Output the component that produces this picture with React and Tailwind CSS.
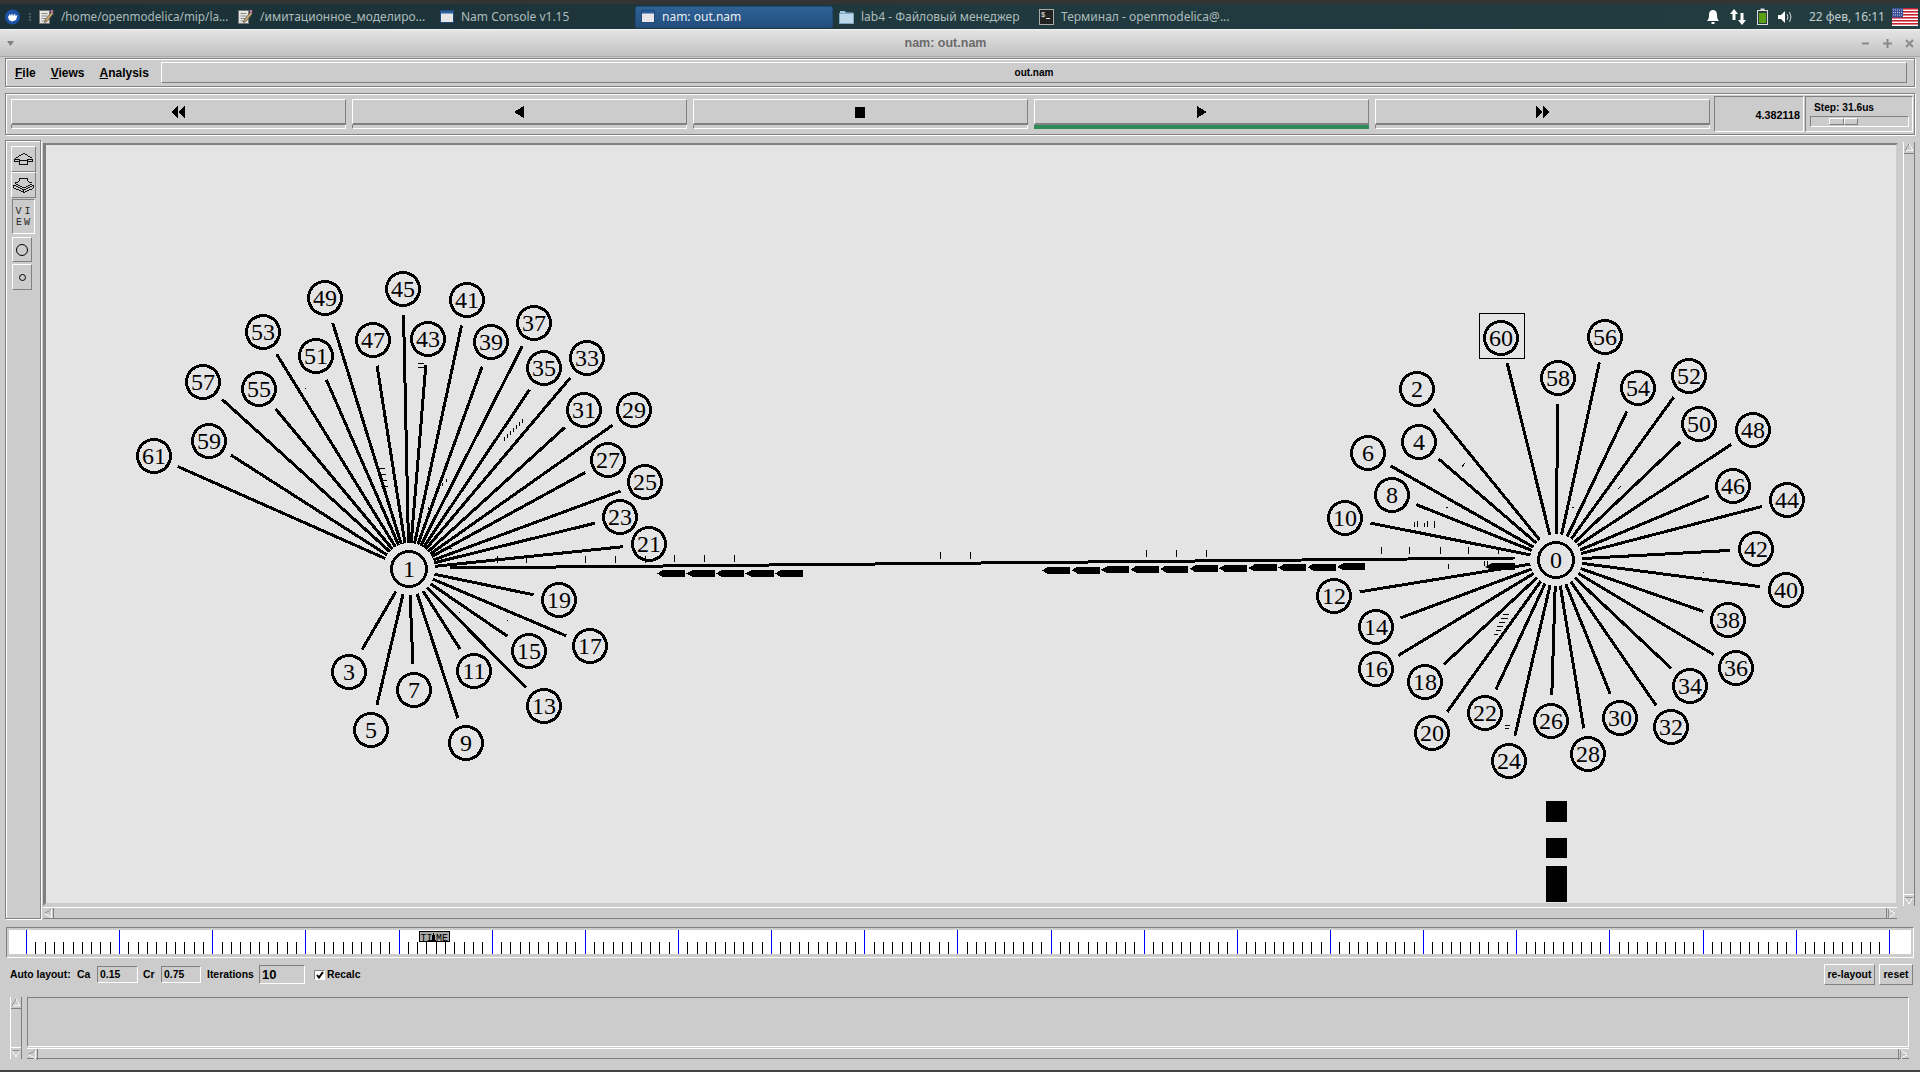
const raised = "border border-t-white border-l-white border-r-[#808080] border-b-[#808080]";
const sunken = "border border-t-[#808080] border-l-[#808080] border-r-white border-b-white";
const groove = "border border-[#808080] shadow-[inset_1px_1px_0_#fff,1px_1px_0_#fff]";

// node positions are page pixels, the svg viewBox below keeps them close to that
const leftNodes = [
  [3, 349, 671], [5, 371, 729], [7, 414, 689], [9, 466, 742], [11, 474, 670], [13, 544, 705],
  [15, 529, 650], [17, 590, 645], [19, 559, 599], [21, 649, 543], [23, 620, 516], [25, 645, 481],
  [27, 608, 459], [29, 634, 409], [31, 584, 409], [33, 587, 357], [35, 544, 367], [37, 534, 322],
  [39, 491, 341], [41, 467, 299], [43, 428, 338], [45, 403, 288], [47, 373, 339], [49, 325, 297],
  [51, 316, 355], [53, 263, 331], [55, 259, 388], [57, 203, 381], [59, 209, 440], [61, 154, 455],
];
const rightNodes = [
  [2, 1417, 388], [4, 1419, 441], [6, 1368, 452], [8, 1392, 494], [10, 1345, 517], [12, 1334, 595],
  [14, 1376, 626], [16, 1376, 668], [18, 1425, 681], [20, 1432, 732], [22, 1485, 712], [24, 1509, 760],
  [26, 1551, 720], [28, 1588, 753], [30, 1620, 717], [32, 1671, 726], [34, 1690, 685], [36, 1736, 667],
  [38, 1728, 619], [40, 1786, 589], [42, 1756, 548], [44, 1787, 499], [46, 1733, 485], [48, 1753, 429],
  [50, 1699, 423], [52, 1689, 375], [54, 1638, 387], [56, 1605, 336], [58, 1558, 377], [60, 1501, 337],
];
const hub1 = [409, 568];
const hub0 = [1556, 559];

const linkTicks = [
  [497, 555], [526, 555], [585, 555], [615, 555], [645, 555], [674, 554], [704, 554], [734, 554],
  [940, 551], [970, 551], [1146, 549], [1176, 549], [1206, 549], [1381, 546], [1409, 546], [1440, 546],
  [1468, 546], [1498, 546],
];

// tiny marks of packets that are dropped or on their way along the links
const marks = [
  "M418 362h6M418 366h6", "M378 467h7M379 473h7M380 479h7M381 485h7",
  "M504 436v4M507 433v4M510 430v4M513 427v4M516 424v4M519 421v4M522 418v4",
  "M428 506v3M434 496v3M438 488v3M442 482v3M446 478v3",
  "M305 387h1M459 611h1M507 619h1M450 547h2", "M1462 466l3-4M1446 506h2M1618 488l3-3M1572 506h2M1592 542h3M1703 571h1M1523 579h2",
  "M1414 521v5M1417 520v6M1424 522v4M1427 520v6M1434 520v7",
  "M1494 633h4M1496 629h5M1497 625h6M1499 621h6M1501 617h7M1503 613h6",
  "M1505 724h5M1505 727h4", "M1448 563v5M1484 560v5M1487 560v5",
];

// line between two centres, cut back so it stops short of both circles
const trimmed = (from, to, gap) => {
  const dx = to[0] - from[0];
  const dy = to[1] - from[1];
  const len = Math.hypot(dx, dy);
  return {
    x1: from[0] + (dx / len) * gap,
    y1: from[1] + (dy / len) * gap,
    x2: to[0] - (dx / len) * gap,
    y2: to[1] - (dy / len) * gap,
  };
};

const Packets = ({ x, y, count, rise }) => (
  <>
    {Array.from({ length: count }).map((_, i) => {
      const px = x + i * 29.5;
      const py = y - (rise * i) / count;
      return (
        <polygon
          key={i}
          points={`${px},${py + 3.5} ${px + 6},${py} ${px + 28},${py} ${px + 28},${py + 7} ${px + 6},${py + 7}`}
          fill="#000"
          shapeRendering="crispEdges"
        />
      );
    })}
  </>
);

const Node = ({ id, x, y, r = 16.5 }) => (
  <g>
    <circle cx={x} cy={y} r={r} fill="none" stroke="#000" strokeWidth="3" shapeRendering="crispEdges" />
    <text
      x={x}
      y={y + 8}
      textAnchor="middle"
      fontSize="24"
      fill="#000"
      style={{ fontFamily: '"Liberation Serif", serif' }}
    >
      {id}
    </text>
  </g>
);

const Diagram = () => (
  <svg width="1850" height="757" viewBox="46 144 1850 757" className="block">
    <g stroke="#000" strokeWidth="3" shapeRendering="crispEdges">
      {leftNodes.map(([id, x, y]) => (
        <line key={id} {...trimmed(hub1, [x, y], 26)} />
      ))}
      {rightNodes.map(([id, x, y]) => (
        <line key={id} {...trimmed(hub0, [x, y], 26)} />
      ))}
      <line x1="450" y1="567" x2="1515" y2="557" />
    </g>
    <g stroke="#000" strokeWidth="1" fill="none" shapeRendering="crispEdges">
      {linkTicks.map(([x, y]) => (
        <line key={x} x1={x} y1={y} x2={x} y2={y + 7} />
      ))}
      {marks.map((d) => (
        <path key={d} d={d} />
      ))}
      <rect x="1479.5" y="312.5" width="45" height="45" />
    </g>
    <Packets x={657} y={569} count={5} rise={0} />
    <Packets x={1042} y={566} count={11} rise={4} />
    <polygon points="1485,566 1492,562 1515,562 1515,569 1492,569" fill="#000" />
    {leftNodes.map(([id, x, y]) => (
      <Node key={id} id={id} x={x} y={y} />
    ))}
    {rightNodes.map(([id, x, y]) => (
      <Node key={id} id={id} x={x} y={y} />
    ))}
    <Node id={1} x={hub1[0]} y={hub1[1]} r={17.5} />
    <Node id={0} x={hub0[0]} y={hub0[1]} r={17.5} />
    <g fill="#000" shapeRendering="crispEdges">
      <rect x="1546" y="800" width="21" height="21" />
      <rect x="1546" y="837" width="21" height="20" />
      <rect x="1546" y="865" width="21" height="36" />
    </g>
  </svg>
);

const Timeline = () => {
  const blue = Array.from({ length: 21 }).map((_, i) => 26.5 + i * 93.14);
  return (
    <svg width="1902" height="24" viewBox="9 930 1902 24" className="block">
      <g shapeRendering="crispEdges" strokeWidth="1">
        {blue.map((x) => (
          <line key={x} x1={x} y1="930" x2={x} y2="954" stroke="#0000ff" />
        ))}
        {blue.slice(0, 20).map((x) =>
          [1, 2, 3, 4, 5, 6, 7, 8, 9].map((i) => (
            <line key={i} x1={x + i * 9.31} y1="942" x2={x + i * 9.31} y2="954" stroke="#000" />
          ))
        )}
        <rect x="419.5" y="931.5" width="30" height="10" fill="#a8a8a8" stroke="#000" />
      </g>
      <text x="420.5" y="940.5" fontSize="10" fill="#000" style={{ fontFamily: '"Liberation Mono", monospace' }}>TI</text>
      <text x="436" y="940.5" fontSize="10" fill="#000" style={{ fontFamily: '"Liberation Mono", monospace' }}>ME</text>
      <polygon points="433,933 434,933 436,942 431,942" fill="#000" shapeRendering="crispEdges" />
    </svg>
  );
};

const ScrollArrow = ({ dir, className }) => {
  const points = {
    up: "6,2 1,10 11,10",
    down: "1,2 11,2 6,10",
    left: "2,6 10,1 10,11",
    right: "2,1 2,11 10,6",
  };
  return (
    <svg viewBox="0 0 12 12" className={className}>
      <polygon points={points[dir]} fill="#cccccc" stroke="#fff" strokeWidth="1" shapeRendering="crispEdges" />
      <polyline
        points={points[dir].split(" ").slice(0, 2).join(" ")}
        fill="none"
        stroke="#808080"
        strokeWidth="1"
        shapeRendering="crispEdges"
      />
    </svg>
  );
};

const HScroll = ({ className }) => (
  <div className={`flex items-stretch border-t border-t-white border-b border-b-[#808080] ${className}`}>
    <ScrollArrow dir="left" className="w-[11px] h-[11px] shrink-0 border-r border-[#808080]" />
    <div className="flex-1" />
    <ScrollArrow dir="right" className="w-[11px] h-[11px] shrink-0 border-l border-[#808080]" />
  </div>
);

const VScroll = ({ className }) => (
  <div className={`flex flex-col items-stretch border-l border-l-white border-r border-r-[#808080] ${className}`}>
    <ScrollArrow dir="up" className="w-full h-[12px] shrink-0 border-b border-[#808080]" />
    <div className="flex-1" />
    <ScrollArrow dir="down" className="w-full h-[12px] shrink-0 border-t border-white" />
  </div>
);

const NoteIcon = () => (
  <svg width="15" height="15" viewBox="0 0 15 15" className="shrink-0">
    <rect x="0.5" y="1.5" width="10" height="13" fill="#e8e8e4" stroke="#777" />
    <path d="M2.5 4.5h6M2.5 7h6M2.5 9.5h5M2.5 12h4" stroke="#888" strokeWidth="1" />
    <path d="M6 11 L12.5 3 L14.5 4.5 L8 12.5 L5.5 13.5 Z" fill="#c9a86a" stroke="#4a4a4a" strokeWidth="0.7" />
    <rect x="11.8" y="1" width="2.5" height="2.4" fill="#c77fa8" transform="rotate(35 13 2)" />
  </svg>
);

const WindowIcon = () => (
  <svg width="14" height="13" viewBox="0 0 14 13" className="shrink-0">
    <rect x="0.5" y="0.5" width="13" height="12" fill="#e6e6e6" stroke="#1f4a7a" />
    <rect x="1" y="1" width="12" height="2.5" fill="#2a5f9e" />
  </svg>
);

const FolderIcon = () => (
  <svg width="15" height="14" viewBox="0 0 15 14" className="shrink-0">
    <path d="M1 3 V1 H6 L7 2.5 H14 V4 Z" fill="#9fc4dd" />
    <rect x="0.5" y="3.5" width="14" height="10" fill="#bcd8ea" stroke="#7fa6c2" />
  </svg>
);

const TerminalIcon = () => (
  <svg width="15" height="16" viewBox="0 0 15 16" className="shrink-0">
    <rect x="0.5" y="0.5" width="14" height="15" fill="#222" stroke="#aaa" />
    <text x="2" y="7.5" fontSize="7" fill="#eee" style={{ fontFamily: '"Liberation Mono", monospace' }}>$</text>
    <path d="M7 9.5h4" stroke="#eee" strokeWidth="1" />
  </svg>
);

const TaskItem = ({ icon, label, className = "", textClass = "text-[12px] text-[#aebcbc]" }) => (
  <div className={`flex items-center shrink-0 gap-[7px] ${className}`}>
    {icon}
    <span className={`whitespace-nowrap ${textClass}`}>{label}</span>
  </div>
);

const TaskBar = () => (
  <div
    className="h-[29px] flex items-center shrink-0 border-t-4 border-t-[#343434] bg-gradient-to-r from-[#1a3036] via-[#1f393e] to-[#223c40] pl-[5px] overflow-hidden"
    style={{ fontFamily: '"Noto Sans", sans-serif' }}
  >
    <svg width="15" height="16" viewBox="0 0 15 16" className="shrink-0">
      <circle cx="7.5" cy="8" r="7.5" fill="#1d52a8" />
      <path d="M3 8 L5 5 L6 7 L7 4 L8 7 L10 4.5 L10.5 7 L12.5 6 L11 11 L7 12.5 L4 11 Z" fill="#fff" />
    </svg>
    <div className="w-[2px] h-[8px] ml-[9px] mr-[8px] border-l-2 border-dotted border-[#4b5b5e]" />
    <TaskItem icon={<NoteIcon />} label="/home/openmodelica/mip/la..." className="w-[199px]" textClass="text-[11.7px] text-[#aebcbc]" />
    <TaskItem icon={<NoteIcon />} label="/имитационное_моделиро..." className="w-[202px]" />
    <TaskItem icon={<WindowIcon />} label="Nam Console v1.15" className="w-[195px]" />
    <TaskItem
      icon={<WindowIcon />}
      label="nam: out.nam"
      textClass="text-[12px] text-[#e8eef2]"
      className="w-[198px] h-[22px] pl-[5px] rounded-[2px] border border-[#1f4a75] bg-gradient-to-b from-[#2f6296] to-[#224e7e]"
    />
    <TaskItem icon={<FolderIcon />} label="lab4 - Файловый менеджер" className="w-[200px] ml-[6px]" />
    <TaskItem icon={<TerminalIcon />} label="Терминал - openmodelica@..." />
    <div className="ml-auto flex items-center">
      <svg width="14" height="16" viewBox="0 0 14 16">
        <path d="M7 1 C4 1 3 3.5 3 6 C3 9 2.5 10.5 1 12 H13 C11.5 10.5 11 9 11 6 C11 3.5 10 1 7 1 Z" fill="#fff" />
        <rect x="5.5" y="13" width="3" height="2" fill="#fff" />
      </svg>
      <svg width="18" height="18" viewBox="0 0 18 18" className="ml-[9px]">
        <path d="M5 1 L9 6 H6.5 V12 H3.5 V6 H1 Z" fill="#fff" />
        <path d="M13 17 L17 12 H14.5 V5 H11.5 V12 H9 Z" fill="#fff" />
      </svg>
      <svg width="11" height="17" viewBox="0 0 11 17" className="ml-[10px]">
        <rect x="3.5" y="0.5" width="4" height="2" fill="#ddd" />
        <rect x="0.5" y="2.5" width="10" height="14" fill="#2c3f3f" stroke="#ddd" />
        <rect x="2" y="5" width="7" height="10" fill="#5aa012" />
      </svg>
      <svg width="15" height="14" viewBox="0 0 15 14" className="ml-[10px]">
        <path d="M0 5 H3 L7 1 V13 L3 9 H0 Z" fill="#fff" />
        <path d="M9 4 Q11 7 9 10 M11.5 2 Q14.5 7 11.5 12" fill="none" stroke="#cfd6d6" strokeWidth="1" />
      </svg>
      <span className="ml-[16px] text-[12px] text-[#c4cfd0] whitespace-nowrap">22 фев, 16:11</span>
      <svg width="26" height="18" viewBox="0 0 26 18" className="ml-[7px] mr-[2px]">
        <rect width="26" height="18" fill="#fff" />
        {[0, 3, 6, 9, 12, 15].map((y) => (
          <rect key={y} y={y} width="26" height="1.6" fill="#c8202f" />
        ))}
        <rect width="11" height="9.5" fill="#3a4f94" />
        <path d="M1 2h9M1 4.5h9M1 7h9" stroke="#c9d0e6" strokeWidth="1" strokeDasharray="1 1" />
      </svg>
    </div>
  </div>
);

const TitleBar = () => (
  <div className="h-[28px] shrink-0 flex items-center pl-[7px] pr-[6px] bg-gradient-to-b from-[#e4e4e4] to-[#c2c2c2] border-t border-t-[#f2f2f2] border-b border-b-[#a8a8a8]">
    <svg width="7" height="5" viewBox="0 0 7 5">
      <polygon points="0,0 7,0 3.5,5" fill="#808080" />
    </svg>
    <span className="flex-1 text-center text-[12.5px] font-bold text-[#6b6b6b] pl-[16px]">nam: out.nam</span>
    <div className="flex items-center gap-[13px] text-[#8a8a8a]">
      <svg width="9" height="9" viewBox="0 0 9 9">
        <path d="M1 4.5h7" stroke="#8a8a8a" strokeWidth="2" />
      </svg>
      <svg width="9" height="9" viewBox="0 0 9 9">
        <path d="M0 4.5h9M4.5 0v9" stroke="#8a8a8a" strokeWidth="2" />
      </svg>
      <svg width="9" height="9" viewBox="0 0 9 9">
        <path d="M1 1l7 7M8 1l-7 7" stroke="#8a8a8a" strokeWidth="2" />
      </svg>
    </div>
  </div>
);

const MenuItem = ({ first, rest }) => (
  <span className="text-[12px] font-bold text-black">
    <span className="underline">{first}</span>
    {rest}
  </span>
);

const MenuBar = () => (
  <div className={`h-[29px] mt-px mx-[5px] shrink-0 flex items-center pl-[9px] pr-[7px] ${groove}`}>
    <div className="w-[146px] flex gap-[15px] shrink-0">
      <MenuItem first="F" rest="ile" />
      <MenuItem first="V" rest="iews" />
      <MenuItem first="A" rest="nalysis" />
    </div>
    <div className={`flex-1 h-[21px] flex items-center justify-center text-[10px] font-bold text-black ${raised}`}>
      out.nam
    </div>
  </div>
);

const Glyph = ({ children }) => (
  <svg width="16" height="12" viewBox="0 0 16 12">
    <g fill="#000" shapeRendering="crispEdges">{children}</g>
  </svg>
);

const PlayButton = ({ children, active }) => (
  <div className="w-[335px] flex flex-col shrink-0">
    <div className={`h-[26px] flex items-center justify-center border-t border-l border-t-white border-l-white border-r border-r-[#808080] border-b-2 border-b-[#808080]`}>
      {children}
    </div>
    <div className={`h-[4px] border-l border-r border-b ${active ? "bg-[#2e8b57] border-[#2e8b57]" : "border-l-[#808080] border-r-white border-b-white"}`} />
  </div>
);

const ToolBar = () => (
  <div className={`h-[42px] mt-[6px] mx-[5px] shrink-0 flex pl-[5px] pr-[2px] ${groove}`}>
    <div className="flex gap-[6px] pt-[5px]">
      <PlayButton>
        <Glyph>
          <polygon points="7,0 7,12 0,6" />
          <polygon points="14,0 14,12 7,6" />
        </Glyph>
      </PlayButton>
      <PlayButton>
        <Glyph>
          <polygon points="12,0 12,12 2,6" />
        </Glyph>
      </PlayButton>
      <PlayButton>
        <Glyph>
          <rect x="2" y="1" width="10" height="11" />
        </Glyph>
      </PlayButton>
      <PlayButton active>
        <Glyph>
          <polygon points="3,0 3,12 13,6" />
        </Glyph>
      </PlayButton>
      <PlayButton>
        <Glyph>
          <polygon points="1,0 1,12 8,6" />
          <polygon points="8,0 8,12 15,6" />
        </Glyph>
      </PlayButton>
    </div>
    <div className="flex ml-[4px] pt-[2px] h-[38px]">
      <div className={`w-[90px] h-[36px] flex items-center justify-end pr-[3px] pt-[2px] text-[10.8px] font-bold text-black ${sunken}`}>
        4.382118
      </div>
      <div className={`w-[108px] h-[36px] ml-px flex flex-col pl-[4px] pr-[3px] ${sunken}`}>
        <span className="text-[10.2px] font-bold text-black pl-[4px] mt-[4px] leading-[13px]">Step: 31.6us</span>
        <div className={`h-[11px] mt-[2px] pl-[18px] py-px ${sunken}`}>
          <div className="w-[29px] h-full flex">
            <div className={`flex-1 ${raised}`} />
            <div className={`flex-1 ${raised}`} />
          </div>
        </div>
      </div>
    </div>
  </div>
);

const SideButton = ({ children, className }) => (
  <div className={`flex items-center justify-center shrink-0 ${raised} ${className}`}>{children}</div>
);

const SideBar = () => (
  <div className={`w-[36px] h-[779px] ml-[5px] shrink-0 flex flex-col items-center pt-[5px] ${groove}`}>
    <SideButton className="w-[25px] h-[26px]">
      <svg width="25" height="26" viewBox="0 0 25 26">
        <g fill="none" stroke="#000" strokeWidth="1" shapeRendering="crispEdges">
          <path d="M12.5 7 L3 13 H8 V19 H17 V13 H22 Z" />
          <path d="M3 13 V16 H8 M22 13 V16 H17 M8 15 H17" />
        </g>
      </svg>
    </SideButton>
    <SideButton className="w-[25px] h-[26px]">
      <svg width="25" height="26" viewBox="0 0 25 26">
        <g fill="none" stroke="#000" strokeWidth="1" shapeRendering="crispEdges">
          <path d="M8 6 H17 V9 L22 11 L12.5 16 L3 11 L8 9 Z" />
          <path d="M2 13 V16 L12.5 21 L23 16 V13 M2 13 L12.5 18 L23 13 M12.5 18 V21" />
        </g>
      </svg>
    </SideButton>
    <div
      className={`w-[23px] h-[35px] mt-px shrink-0 flex flex-col items-center justify-center text-[10px] leading-[11px] text-[#222] ${sunken}`}
      style={{ fontFamily: '"Liberation Mono", monospace' }}
    >
      <span className="tracking-[3px] pl-[3px]">VI</span>
      <span className="tracking-[2px] pl-[2px]">EW</span>
    </div>
    <SideButton className="w-[20px] h-[25px] mt-[3px] mr-[2px]">
      <div className="w-[12px] h-[12px] rounded-full border border-black" />
    </SideButton>
    <SideButton className="w-[20px] h-[26px] mt-[2px] mr-[2px]">
      <div className="w-[7px] h-[7px] rounded-full border border-black" />
    </SideButton>
  </div>
);

const CanvasArea = () => (
  <div className="flex-1 flex ml-[2px] min-w-0">
    <div className="flex-1 flex flex-col pt-[3px] min-w-0">
      <div className="h-[763px] shrink-0 border-t-[2px] border-l-[3px] border-t-[#808080] border-l-[#808080] border-r-[2px] border-b-[3px] border-r-[#cccccc] border-b-[#cccccc] bg-[#e4e4e4] overflow-hidden">
        <Diagram />
      </div>
      <HScroll className="h-[12px] w-[1854px] mt-px" />
    </div>
    <VScroll className="w-[12px] h-[764px] mt-[2px] ml-[5px] mr-[5px] shrink-0" />
  </div>
);

const BottomRow = () => (
  <div className="h-[21px] mt-[6px] shrink-0 flex items-center pl-[10px] pr-[7px] text-[10.4px] font-bold text-black">
    <span className="w-[67px] shrink-0">Auto layout:</span>
    <span className="w-[20px] shrink-0">Ca</span>
    <div className={`w-[41px] h-[17px] flex items-center pl-[2px] shrink-0 ${sunken}`}>0.15</div>
    <span className="w-[18px] pl-[5px] box-content shrink-0">Cr</span>
    <div className={`w-[40px] h-[17px] flex items-center pl-[2px] shrink-0 ${sunken}`}>0.75</div>
    <span className="w-[52px] ml-[6px] shrink-0">Iterations</span>
    <div className={`w-[46px] h-[19px] flex items-center pl-[2px] text-[13px] shrink-0 ${sunken}`}>10</div>
    <div className={`w-[11px] h-[10px] ml-[9px] bg-white flex items-center justify-center shrink-0 ${sunken}`}>
      <svg width="8" height="8" viewBox="0 0 8 8">
        <path d="M1 4 L3 6.5 L7 1" fill="none" stroke="#000" strokeWidth="2" />
      </svg>
    </div>
    <span className="ml-[2px]">Recalc</span>
    <div className={`ml-auto w-[51px] h-[21px] flex items-center justify-center ${raised}`}>re-layout</div>
    <div className={`ml-[4px] w-[34px] h-[21px] flex items-center justify-center ${raised}`}>reset</div>
  </div>
);

const BottomPanel = () => (
  <div className="h-[62px] mt-[12px] shrink-0 flex pl-[10px] pr-[11px]">
    <VScroll className="w-[12px] h-[62px] shrink-0" />
    <div className="flex-1 ml-[5px] flex flex-col min-w-0">
      <div className={`h-[50px] shrink-0 ${sunken}`} />
      <HScroll className="h-[11px] mt-px" />
    </div>
  </div>
);

export default function App() {
  return (
    <div
      className="w-[1920px] h-[1072px] overflow-hidden flex flex-col bg-[#cccccc]"
      style={{ fontFamily: '"Liberation Sans", Arial, sans-serif' }}
    >
      <TaskBar />
      <TitleBar />
      <MenuBar />
      <ToolBar />
      <div className="flex h-[779px] mt-[5px] shrink-0">
        <SideBar />
        <CanvasArea />
      </div>
      <div className={`h-[31px] mt-[8px] ml-[6px] mr-[6px] shrink-0 p-[2px] bg-[#cccccc] ${sunken}`}>
        <div className="bg-white h-[24px] w-[1902px] overflow-hidden">
          <Timeline />
        </div>
      </div>
      <BottomRow />
      <BottomPanel />
      <div className="mt-auto h-[2px] bg-[#444444] shrink-0" />
    </div>
  );
}
